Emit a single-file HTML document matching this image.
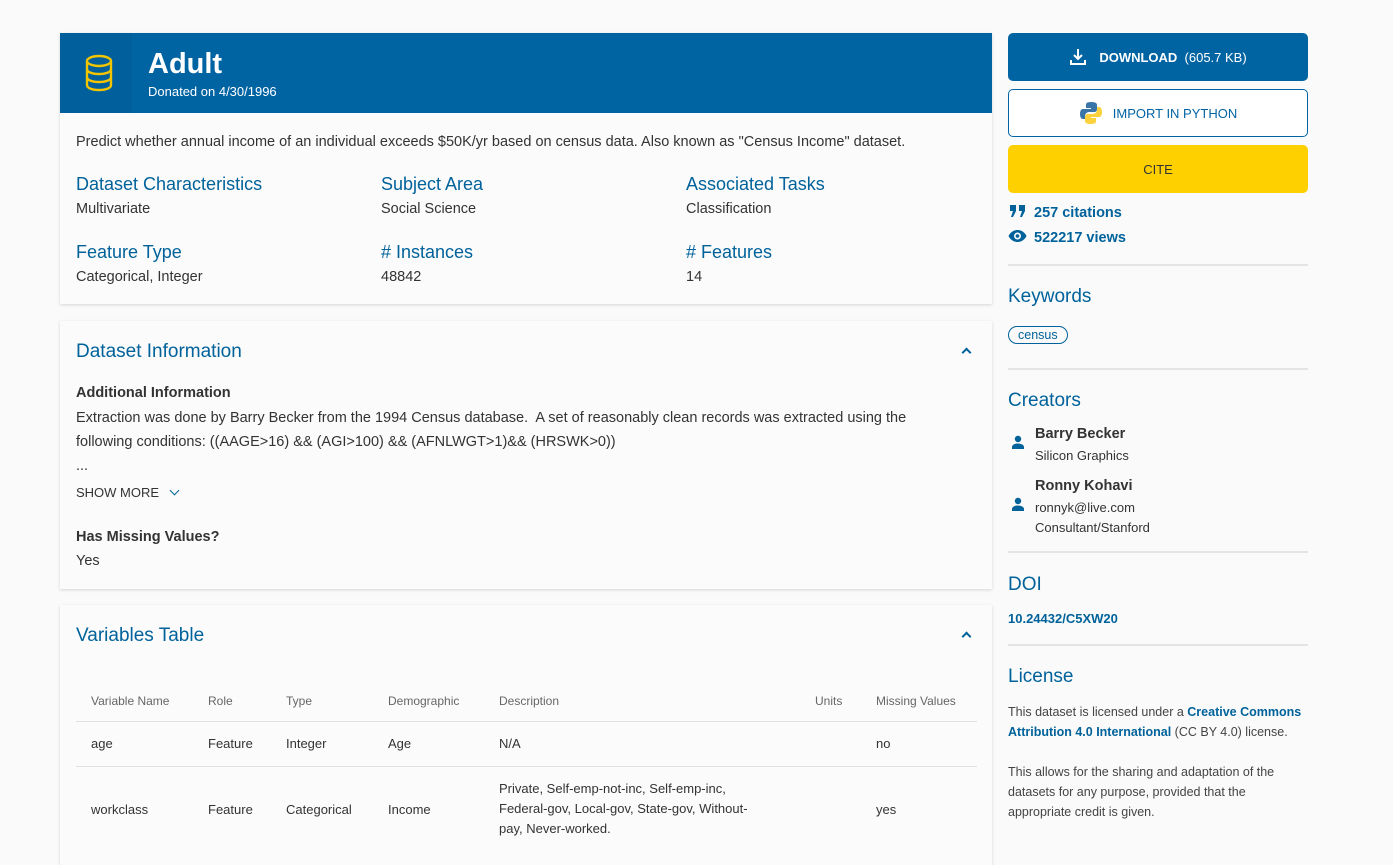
<!DOCTYPE html>
<html><head><meta charset="utf-8"><style>
*{box-sizing:border-box;margin:0;padding:0}
body{width:1393px;height:841px;overflow:hidden;background:#fafafa;font-family:"Liberation Sans",sans-serif;color:#333;position:relative}
.b{color:#00629b}
.card{position:absolute;left:60px;width:932px;background:#fbfbfb;box-shadow:0 1px 3px rgba(0,0,0,.15)}
.abs{position:absolute}
.h3{font-size:18px;color:#00629b}
.t{font-size:14.5px}
.chev{position:absolute;right:22px;width:7px;height:7px;border-left:2px solid #00629b;border-top:2px solid #00629b;transform:rotate(45deg)}
table{border-collapse:collapse;font-size:13px}
th{font-weight:normal;color:#666;font-size:12px;text-align:left;height:40px}
td{border-top:1px solid #e0e0e0}
.hr{position:absolute;left:1008px;width:300px;height:2px;background:#e4e4e4}
</style></head><body>
<div class="card" style="top:33px;height:271px">
 <div class="abs" style="left:0;top:0;width:932px;height:80px;background:#0064a3"></div>
 <div class="abs" style="left:0;top:0;width:72px;height:80px;background:#015f9b"></div>
 <svg class="abs" style="left:24px;top:20px" width="30" height="40" viewBox="0 0 30 40" fill="none" stroke="#f2c500" stroke-width="2.4"><ellipse cx="15" cy="8" rx="12" ry="5"/><path d="M3 8v24c0 3 5 5 12 5s12-2 12-5V8M3 16c0 3 5 5 12 5s12-2 12-5M3 24c0 3 5 5 12 5s12-2 12-5"/></svg>
 <div class="abs" style="left:88px;top:15px;font-size:29px;font-weight:bold;color:#fff">Adult</div>
 <div class="abs" style="left:88px;top:51px;font-size:13px;color:#fff">Donated on 4/30/1996</div>
 <div class="abs t" style="left:16px;top:101px">Predict whether annual income of an individual exceeds $50K/yr based on census data. Also known as "Census Income" dataset.</div>
 <div class="abs h3" style="left:16px;top:141px">Dataset Characteristics</div><div class="abs t" style="left:16px;top:168px">Multivariate</div>
 <div class="abs h3" style="left:321px;top:141px">Subject Area</div><div class="abs t" style="left:321px;top:168px">Social Science</div>
 <div class="abs h3" style="left:626px;top:141px">Associated Tasks</div><div class="abs t" style="left:626px;top:168px">Classification</div>
 <div class="abs h3" style="left:16px;top:209px">Feature Type</div><div class="abs t" style="left:16px;top:236px">Categorical, Integer</div>
 <div class="abs h3" style="left:321px;top:209px"># Instances</div><div class="abs t" style="left:321px;top:236px">48842</div>
 <div class="abs h3" style="left:626px;top:209px"># Features</div><div class="abs t" style="left:626px;top:236px">14</div>
</div>
<div class="card" style="top:321px;height:268px">
 <div class="abs" style="left:16px;top:20px;font-size:19px;color:#00629b">Dataset Information</div>
 <div class="chev" style="top:28px"></div>
 <div class="abs t" style="left:16px;top:64px;font-weight:bold">Additional Information</div>
 <div class="abs t" style="left:16px;top:85px;width:880px;line-height:24px">Extraction was done by Barry Becker from the 1994 Census database.&nbsp; A set of reasonably clean records was extracted using the following conditions: ((AAGE&gt;16) &amp;&amp; (AGI&gt;100) &amp;&amp; (AFNLWGT&gt;1)&amp;&amp; (HRSWK&gt;0))<br>...</div>
 <div class="abs" style="left:16px;top:164px;font-size:13px;color:#333">SHOW MORE <span style="display:inline-block;width:7px;height:7px;border-right:1.5px solid #00629b;border-bottom:1.5px solid #00629b;transform:rotate(45deg);margin:0 0 3px 8px"></span></div>
 <div class="abs t" style="left:16px;top:208px;font-weight:bold">Has Missing Values?</div>
 <div class="abs t" style="left:16px;top:232px">Yes</div>
</div>
<div class="card" style="top:605px;height:260px">
 <div class="abs" style="left:16px;top:20px;font-size:19px;color:#00629b">Variables Table</div>
 <div class="chev" style="top:28px"></div>
 <table class="abs" style="left:16px;top:76px;width:901px">
 <tr><th style="padding-left:15px;width:132px">Variable Name</th><th style="width:78px">Role</th><th style="width:102px">Type</th><th style="width:111px">Demographic</th><th style="width:316px">Description</th><th style="width:61px">Units</th><th>Missing Values</th></tr>
 <tr style="height:45px"><td style="padding-left:15px">age</td><td>Feature</td><td>Integer</td><td>Age</td><td>N/A</td><td></td><td>no</td></tr>
 <tr style="height:86px"><td style="padding-left:15px">workclass</td><td>Feature</td><td>Categorical</td><td>Income</td><td style="line-height:20px;padding-right:50px">Private, Self-emp-not-inc, Self-emp-inc, Federal-gov, Local-gov, State-gov, Without-pay, Never-worked.</td><td></td><td>yes</td></tr>
 </table>
</div>
<div class="abs" style="left:1008px;top:33px;width:300px;height:48px;background:#0064a3;border-radius:5px;color:#fff;font-size:13px;display:flex;align-items:center;justify-content:center">
 <svg width="18" height="18" viewBox="0 0 18 18" fill="none" stroke="#fff" stroke-width="2" style="margin-right:12px"><path d="M9 1v10M5 7l4 4 4-4M2 12v4h14v-4"/></svg><b>DOWNLOAD</b>&nbsp;&nbsp;(605.7 KB)</div>
<div class="abs" style="left:1008px;top:89px;width:300px;height:48px;border:1px solid #0064a3;border-radius:5px;color:#0064a3;font-size:13px;display:flex;align-items:center;justify-content:center;background:#fff">
 <svg width="24" height="24" viewBox="0 0 24 24" style="margin-right:10px"><path d="M12 1c-5 0-5 2-5 3v3h5v1H4c-2 0-3 2-3 5s1 5 3 5h2v-3c0-2 2-4 4-4h5c2 0 3-1 3-3V4c0-2-2-3-6-3z" fill="#3a75a8"/><path d="M12 23c5 0 5-2 5-3v-3h-5v-1h8c2 0 3-2 3-5s-1-5-3-5h-2v3c0 2-2 4-4 4H9c-2 0-3 1-3 3v4c0 2 2 3 6 3z" fill="#fcd23c"/></svg>IMPORT IN PYTHON</div>
<div class="abs" style="left:1008px;top:145px;width:300px;height:48px;background:#ffd000;border-radius:5px;color:#333;font-size:13px;display:flex;align-items:center;justify-content:center">CITE</div>
<div class="abs b" style="left:1010px;top:205px;font-size:14.5px;font-weight:bold"><svg width="16" height="12" viewBox="0 0 16 12" style="margin-right:8px;vertical-align:0"><path d="M0 0h6v6l-3 6H1l2-6H0zM9 0h6v6l-3 6h-2l2-6H9z" fill="#00629b"/></svg>257 citations</div>
<div class="abs b" style="left:1008px;top:229px;font-size:14.5px;font-weight:bold"><svg width="19" height="14" viewBox="0 0 19 14" style="margin-right:7px;vertical-align:-1px"><path d="M9.5 1C5 1 2 4 .5 7 2 10 5 13 9.5 13S17 10 18.5 7C17 4 14 1 9.5 1z" fill="#00629b"/><circle cx="9.5" cy="7" r="3.5" fill="#fafafa"/><circle cx="9.5" cy="7" r="1.8" fill="#00629b"/></svg>522217 views</div>
<div class="hr" style="top:264px"></div>
<div class="abs b" style="left:1008px;top:286px;font-size:19px">Keywords</div>
<div class="abs b" style="left:1008px;top:326px;border:1px solid #00629b;border-radius:10px;padding:1px 9px;font-size:12.5px">census</div>
<div class="hr" style="top:368px"></div>
<div class="abs b" style="left:1008px;top:390px;font-size:19px">Creators</div>
<svg class="abs" style="left:1011px;top:435px" width="14" height="14" viewBox="0 0 14 14" fill="#00629b"><circle cx="7" cy="4" r="3.2"/><path d="M1 14v-2c0-2 3-3.5 6-3.5s6 1.5 6 3.5v2z"/></svg>
<div class="abs" style="left:1035px;top:426px;font-size:14.5px;font-weight:bold">Barry Becker</div>
<div class="abs" style="left:1035px;top:448px;font-size:13px">Silicon Graphics</div>
<svg class="abs" style="left:1011px;top:497px" width="14" height="14" viewBox="0 0 14 14" fill="#00629b"><circle cx="7" cy="4" r="3.2"/><path d="M1 14v-2c0-2 3-3.5 6-3.5s6 1.5 6 3.5v2z"/></svg>
<div class="abs" style="left:1035px;top:478px;font-size:14.5px;font-weight:bold">Ronny Kohavi</div>
<div class="abs" style="left:1035px;top:500px;font-size:13px">ronnyk@live.com</div>
<div class="abs" style="left:1035px;top:520px;font-size:13px">Consultant/Stanford</div>
<div class="hr" style="top:551px"></div>
<div class="abs b" style="left:1008px;top:574px;font-size:19px">DOI</div>
<div class="abs b" style="left:1008px;top:611px;font-size:13px;font-weight:bold">10.24432/C5XW20</div>
<div class="hr" style="top:644px"></div>
<div class="abs b" style="left:1008px;top:666px;font-size:19px">License</div>
<div class="abs" style="left:1008px;top:702px;width:300px;font-size:12.5px;line-height:20px;color:#444">This dataset is licensed under a <b class="b">Creative Commons Attribution 4.0 International</b> (CC BY 4.0) license.<br><br>This allows for the sharing and adaptation of the datasets for any purpose, provided that the appropriate credit is given.</div>
</body></html>
